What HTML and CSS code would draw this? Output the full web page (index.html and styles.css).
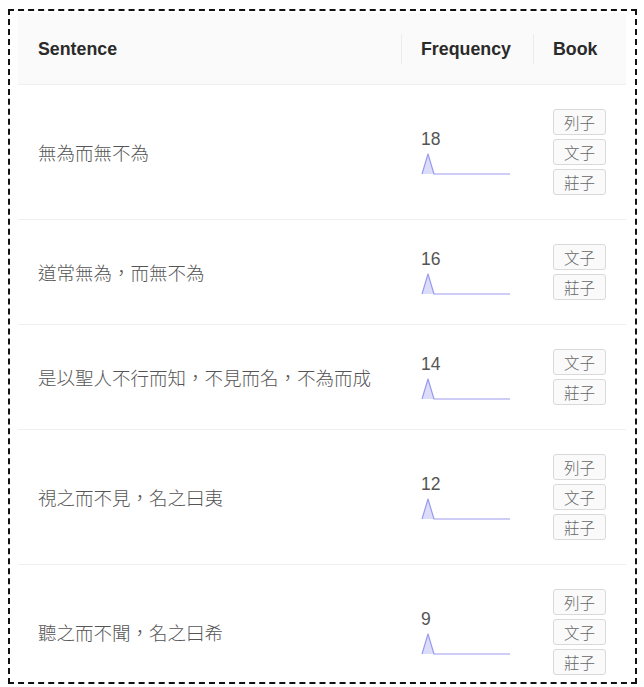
FILE: index.html
```html
<!DOCTYPE html>
<html lang="zh-Hant">
<head>
<meta charset="utf-8">
<title>Sentences</title>
<link rel="stylesheet" href="styles.css">
</head>
<body>
<div class="frame">
  <table class="table">
    <colgroup>
      <col class="c-sentence">
      <col class="c-freq">
      <col class="c-book">
    </colgroup>
    <thead>
      <tr>
        <th>Sentence</th>
        <th class="sep">Frequency</th>
        <th class="sep">Book</th>
      </tr>
    </thead>
    <tbody>
      <tr>
        <td class="sentence">無為而無不為</td>
        <td>
          <div class="num">18</div>
          <svg class="spark" width="90" height="24" viewBox="0 0 90 24"><path class="area" d="M1 21 L7 1 L13 21 Z"/><polyline class="line" points="1,21 7,1 13,21 89,21"/></svg>
        </td>
        <td><div class="tags"><span class="tag">列子</span><span class="tag">文子</span><span class="tag">莊子</span></div></td>
      </tr>
      <tr>
        <td class="sentence">道常無為，而無不為</td>
        <td>
          <div class="num">16</div>
          <svg class="spark" width="90" height="24" viewBox="0 0 90 24"><path class="area" d="M1 21 L7 1 L13 21 Z"/><polyline class="line" points="1,21 7,1 13,21 89,21"/></svg>
        </td>
        <td><div class="tags"><span class="tag">文子</span><span class="tag">莊子</span></div></td>
      </tr>
      <tr>
        <td class="sentence">是以聖人不行而知，不見而名，不為而成</td>
        <td>
          <div class="num">14</div>
          <svg class="spark" width="90" height="24" viewBox="0 0 90 24"><path class="area" d="M1 21 L7 1 L13 21 Z"/><polyline class="line" points="1,21 7,1 13,21 89,21"/></svg>
        </td>
        <td><div class="tags"><span class="tag">文子</span><span class="tag">莊子</span></div></td>
      </tr>
      <tr>
        <td class="sentence">視之而不見，名之曰夷</td>
        <td>
          <div class="num">12</div>
          <svg class="spark" width="90" height="24" viewBox="0 0 90 24"><path class="area" d="M1 21 L7 1 L13 21 Z"/><polyline class="line" points="1,21 7,1 13,21 89,21"/></svg>
        </td>
        <td><div class="tags"><span class="tag">列子</span><span class="tag">文子</span><span class="tag">莊子</span></div></td>
      </tr>
      <tr>
        <td class="sentence">聽之而不聞，名之曰希</td>
        <td>
          <div class="num">9</div>
          <svg class="spark" width="90" height="24" viewBox="0 0 90 24"><path class="area" d="M1 21 L7 1 L13 21 Z"/><polyline class="line" points="1,21 7,1 13,21 89,21"/></svg>
        </td>
        <td><div class="tags"><span class="tag">列子</span><span class="tag">文子</span><span class="tag">莊子</span></div></td>
      </tr>
    </tbody>
  </table>
</div>
</body>
</html>
```

FILE: styles.css
```css
html, body {
  margin: 0;
  padding: 0;
  background: #fff;
}

body {
  font-family: "Liberation Sans", Arial, "Noto Sans CJK TC", sans-serif;
  color: #555;
}

.frame {
  margin: 9px 7px 0 8px;
  height: 675px;
  border: 2px dashed #111;
  padding: 2px 8px 0 8px;
  overflow: hidden;
  box-sizing: border-box;
}

.table {
  width: 608px;
  border-collapse: collapse;
  table-layout: fixed;
}

.c-sentence { width: 383px; }
.c-freq { width: 132px; }
.c-book { width: 93px; }

th {
  height: 69px;
  padding: 2px 20px 0;
  background: #fafafa;
  color: #2a2a2a;
  font-family: "Liberation Sans", Arial, sans-serif;
  font-size: 17.8px;
  font-weight: 700;
  text-align: left;
  border-bottom: 1px solid #f0f0f0;
  position: relative;
}

th:first-child { border-top-left-radius: 3px; }
th:last-child { border-top-right-radius: 3px; }

th.sep::before {
  content: "";
  position: absolute;
  left: 0;
  top: 50%;
  width: 1px;
  height: 30px;
  margin-top: -15px;
  background: #ececec;
}

td {
  padding: 24px 20px;
  border-bottom: 1px solid #f0f0f0;
  vertical-align: middle;
  font-size: 17.5px;
}

.sentence {
  font-family: "Noto Sans CJK TC", "Noto Sans CJK SC", sans-serif;
  font-size: 18.5px;
  font-weight: 300;
  color: #555;
  white-space: nowrap;
}

.num {
  line-height: 24px;
  color: #555;
  margin-bottom: 2px;
}

.spark {
  display: block;
}

.spark .area {
  fill: #dcdcfb;
}

.spark .line {
  fill: none;
  stroke: #9b9bef;
  stroke-width: 1.2;
  stroke-linejoin: round;
}

.tags {
  display: flex;
  flex-direction: column;
  align-items: flex-start;
  gap: 4px;
}

.tag {
  display: block;
  height: 26px;
  line-height: 24px;
  box-sizing: border-box;
  padding: 0 10px;
  font-family: "Noto Sans CJK TC", "Noto Sans CJK SC", sans-serif;
  font-size: 15.5px;
  font-weight: 300;
  color: #666;
  background: #fafafa;
  border: 1px solid #d9d9d9;
  border-radius: 3px;
  white-space: nowrap;
}
```
